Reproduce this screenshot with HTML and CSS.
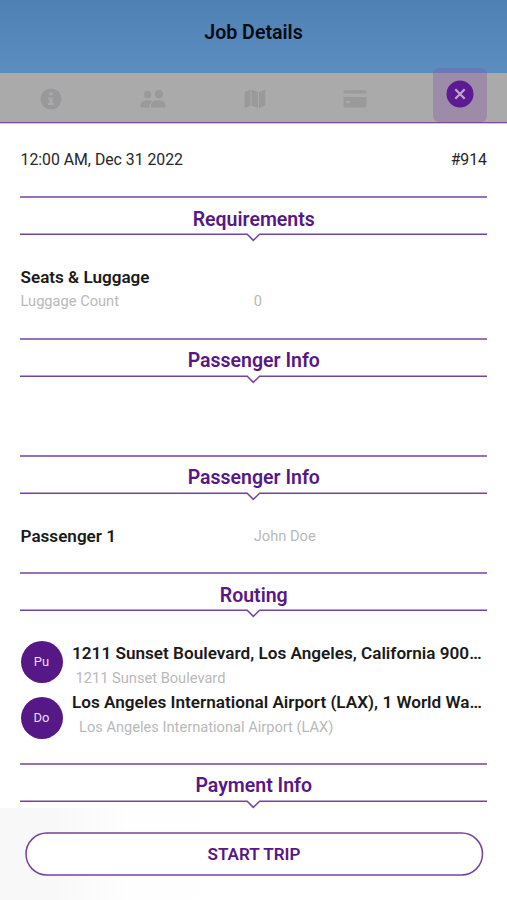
FILE: index.html
```html
<!DOCTYPE html>
<html lang="en">
<head>
<meta charset="utf-8">
<title>Job Details</title>
<link rel="stylesheet" href="styles.css">
</head>
<body>
<svg class="defs" width="0" height="0" aria-hidden="true">
  <symbol id="rule" viewBox="0 0 467 48">
    <path d="M0 1H467M0 38.3H227.2L233.3 44.4L239.6 38.3H467" fill="none" stroke="#571887" stroke-opacity=".82" stroke-width="1.5"/>
  </symbol>
</svg>
<header class="topbar"><h1>Job Details</h1></header>
<nav class="tabs">
  <div class="tab"><svg width="22" height="22" viewBox="0 0 22 22"><circle cx="11" cy="11" r="10.5" fill="#99999b"/><circle cx="11" cy="6" r="1.8" fill="#aaa"/><path d="M8 9.5h4.5v5.5H14v2H8v-2h1.500v-3.500H8z" fill="#aaa"/></svg></div>
  <div class="tab people"><svg width="26" height="22" viewBox="0 0 26 22" fill="#9a9a9b"><circle cx="7.500" cy="6.500" r="3.700"/><circle cx="19" cy="6" r="4.200"/><path d="M.5 19.500V17.500c0-3.500 3.500-5.300 7.500-5.300 1.800 0 3.200.3 4.400.9-2 1.400-3.200 3.400-3.200 6.400zM11 19.500v-2.300c0-3.300 3.500-5 7.500-5s7 1.700 7 5v2.300z"/></svg></div>
  <div class="tab map"><svg width="22" height="22" viewBox="0 0 22 22" fill="#9a9a9b"><path d="M.5 4.200 6.500 1.500v16L.5 20.300zM7.500 1.500l6.500 2.700v16l-6.500-2.700zM15 4.200l6.300-2.700v16l-6.300 2.700z"/></svg></div>
  <div class="tab"><svg width="24" height="20" viewBox="0 0 24 20" fill="#9a9a9b"><path d="M.5 4.500V3A1.800 1.800 0 0 1 2.300 1.200h19.400A1.800 1.800 0 0 1 23.500 3v1.500zM.5 8h23v8.700a1.800 1.800 0 0 1-1.800 1.800H2.300a1.800 1.800 0 0 1-1.800-1.800zM3 12v2h4v-2z" fill-rule="evenodd"/></svg></div>
  <div class="tab close"><button class="close-box" aria-label="Close"><svg width="28" height="28" viewBox="0 0 28 28"><circle cx="14" cy="14" r="13.500" fill="#5c1b93"/><path d="M9.300 9.300l9.400 9.400M18.700 9.300l-9.400 9.400" stroke="#c0a6cd" stroke-width="2.200"/></svg></button></div>
</nav>
<main>
  <div class="meta"><span>12:00 AM, Dec 31 2022</span><span>#914</span></div>
  <section class="requirements">
    <h2><svg><use href="#rule"/></svg><span>Requirements</span></h2>
    <div class="body">
      <h3>Seats &amp; Luggage</h3>
      <div class="pair muted"><span>Luggage Count</span><span>0</span></div>
    </div>
  </section>
  <section class="empty">
    <h2><svg><use href="#rule"/></svg><span>Passenger Info</span></h2>
  </section>
  <section class="passengers">
    <h2><svg><use href="#rule"/></svg><span>Passenger Info</span></h2>
    <div class="body pair"><h3>Passenger 1</h3><span class="muted">John Doe</span></div>
  </section>
  <section class="routing">
    <h2><svg><use href="#rule"/></svg><span>Routing</span></h2>
    <div class="body route">
      <div class="badges"><span>Pu</span><span>Do</span></div>
      <div class="stops">
        <h3>1211 Sunset Boulevard, Los Angeles, California 900…</h3>
        <p class="muted pickup">1211 Sunset Boulevard</p>
        <h3>Los Angeles International Airport (LAX), 1 World Wa…</h3>
        <p class="muted dropoff">Los Angeles International Airport (LAX)</p>
      </div>
    </div>
  </section>
  <section class="payment">
    <h2><svg><use href="#rule"/></svg><span>Payment Info</span></h2>
  </section>
</main>
<footer><button class="start"><svg width="459" height="44" viewBox="0 0 459 44"><rect x="1" y="1" width="456.500" height="42" rx="21" fill="#fff" stroke="#571887" stroke-opacity=".82" stroke-width="1.500"/></svg><span>START TRIP</span></button></footer>
</body>
</html>
```

FILE: styles.css
```css
* { box-sizing: border-box; }
body {
  margin: 0;
  height: 900px;
  overflow: hidden;
  display: flex;
  flex-direction: column;
  background: #fff;
  color: #262626;
  font-family: Roboto, sans-serif;
  font-size: 15.8px;
}
h1, h2, h3, p { margin: 0; }
button { padding: 0; border: 0; background: none; font-family: inherit; }
.defs { position: absolute; }
.topbar {
  height: 73px;
  flex: none;
  background: linear-gradient(#5081b5, #5b8dbf);
  text-align: center;
}
.topbar h1 {
  padding-top: 21px;
  font-size: 19.6px;
  line-height: 24px;
  font-weight: 600;
  color: #030a12;
}
.tabs {
  height: 51px;
  flex: none;
  display: grid;
  grid-template-columns: repeat(5, 101.4px);
  background: linear-gradient(#aaa 49px, #7d4b95 49px, #7d4b95 50px, #d9c2e2 50px);
}
.tab { display: flex; align-items: center; justify-content: center; }
.tab svg { flex: none; }
.people svg { margin-left: 2px; }
.map svg { margin-left: 3px; }
.close-box {
  width: 54px;
  height: 54px;
  margin-top: -8px;
  margin-left: 7px;
  border-radius: 6px;
  background: rgba(131, 85, 164, .35);
  display: flex;
  align-items: center;
  justify-content: center;
}
.close-box svg { margin-top: -1px; }
main { height: 684px; flex: none; padding: 0 20px 0 20.5px; }
.meta {
  height: 72px;
  padding-top: 26px;
  display: flex;
  justify-content: space-between;
  line-height: 20px;
}
section { display: flex; flex-direction: column; }
.requirements { height: 141.7px; }
.empty { height: 117.3px; }
.passengers { height: 117.3px; }
.routing { height: 190.7px; }
h2 {
  position: relative;
  height: 48px;
  flex: none;
  padding-top: 11.5px;
  text-align: center;
  font-size: 19.5px;
  line-height: 24px;
  font-weight: 600;
  color: #571887;
}
h2 svg { position: absolute; left: -.5px; top: 0; width: 467px; height: 48px; }
h3 { font-size: 17.1px; line-height: 24px; font-weight: 600; color: #1a1a1a; }
.muted { color: #b9b9b9; font-size: 14.65px; line-height: 24px; }
.body { padding-top: 21px; }
.pair { display: grid; grid-template-columns: 1fr 1fr; }
.route { display: flex; gap: 9.5px; }
.badges { display: flex; flex-direction: column; gap: 14px; }
.badges span {
  width: 42px;
  height: 42px;
  border-radius: 50%;
  background: #571887;
  color: #e9def2;
  font-size: 13px;
  line-height: 42px;
  text-align: center;
}
.stops { flex: 1; min-width: 0; }
.stops h3 { white-space: nowrap; font-size: 17.15px; }
.stops p { height: 25px; line-height: 26px; }
.pickup { padding-left: 3.5px; }
.dropoff { padding-left: 7px; }
footer {
  flex: 1;
  padding: 24px 24px 0 25px;
  background: linear-gradient(90deg, #f8f8f8 0, #f8f8f8 50px, #fefefe 130px, #fff 250px);
}
.start { position: relative; display: block; width: 458px; height: 44px; color: #571887; font-size: 17.1px; font-weight: 600; }
.start svg { position: absolute; left: 0; top: 0; }
.start span { position: relative; }
```
